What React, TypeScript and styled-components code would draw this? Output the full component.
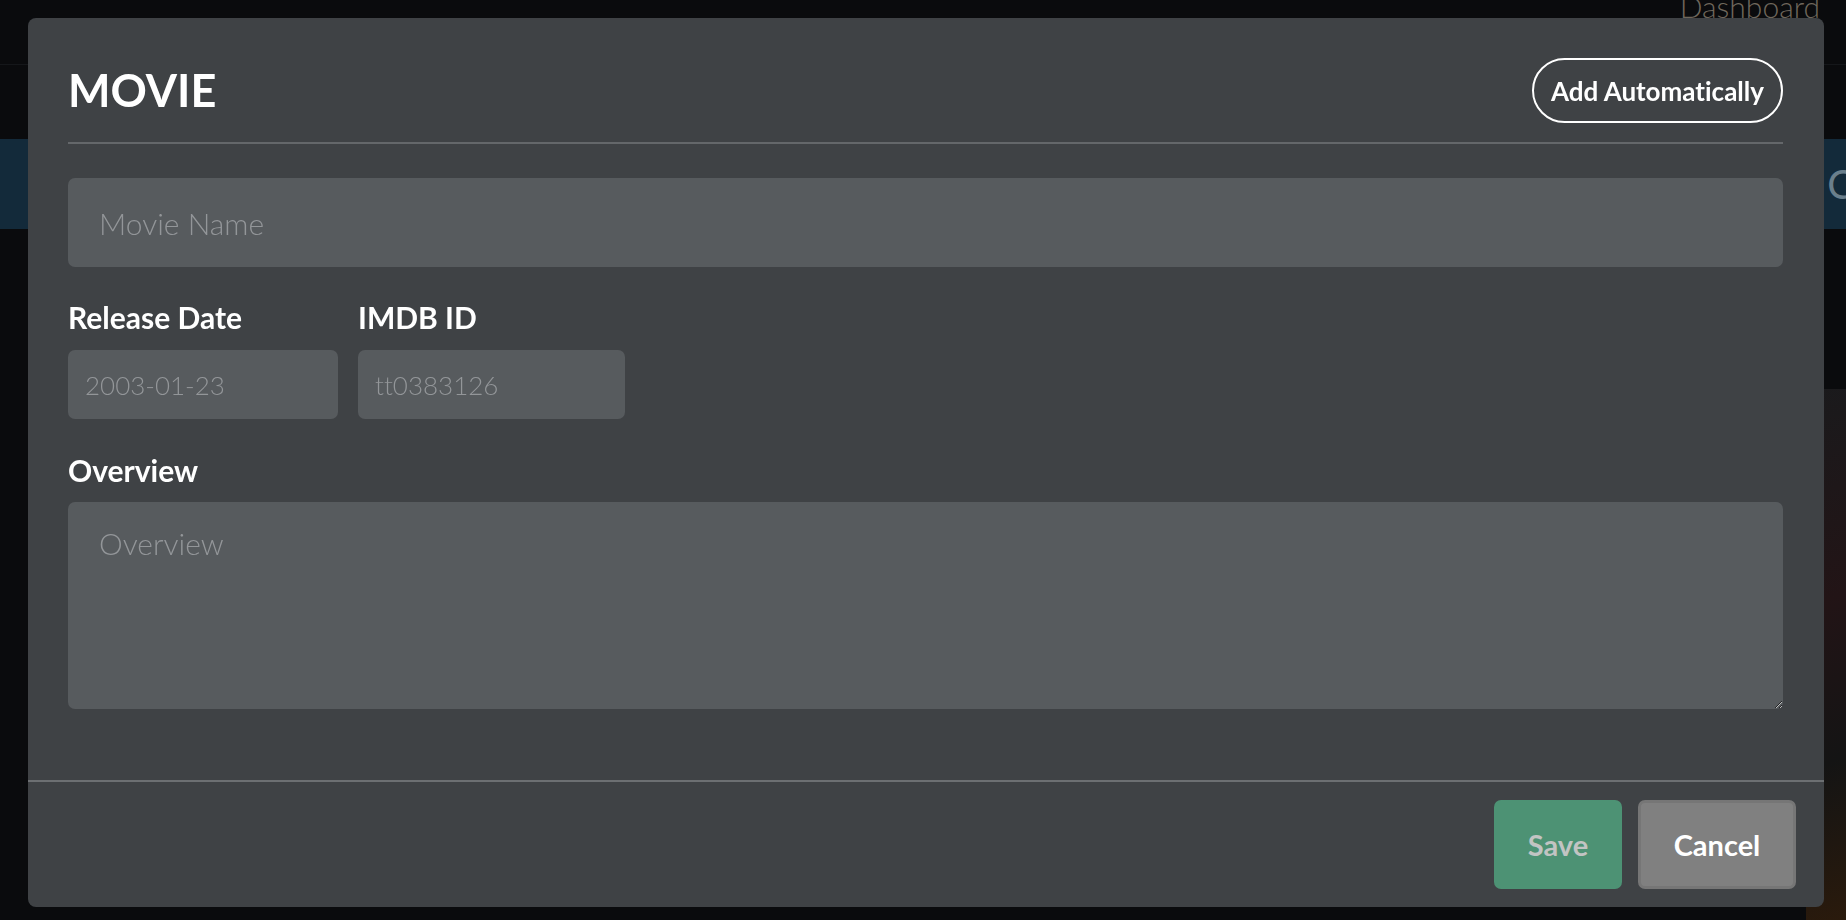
import React from "react";
import styled, { createGlobalStyle } from "styled-components";

const GlobalStyle = createGlobalStyle`
  html, body { margin: 0; padding: 0; }
  body {
    background: #0a0b0d;
    font-family: "Lato", "Noto Sans", sans-serif;
    color: #fff;
    overflow: hidden;
    font-variant-ligatures: none;
  }
  * { box-sizing: border-box; }
  input, textarea, button { font-variant-ligatures: none; }
`;

/* ---------- Backdrop page (dimmed behind the modal) ---------- */
const Page = styled.div`
  width: 1846px;
  height: 920px;
  display: flex;
  flex-direction: column;
  background: #0a0b0d;
`;

const NavBar = styled.div`
  height: 65px;
  display: flex;
  justify-content: flex-end;
  align-items: flex-start;
  padding-right: 26px;
  border-bottom: 1px solid #15171a;
  overflow: hidden;
`;

const NavLink = styled.span`
  font-family: "Lato", sans-serif;
  font-weight: 300;
  font-size: 30px;
  line-height: 36px;
  margin-top: -12px;
  color: #6f675c;
`;

const Banner = styled.div`
  margin-top: 74px;
  height: 90px;
  background: #132a3a;
  display: flex;
  justify-content: flex-end;
  align-items: center;
  overflow: hidden;
`;

const BannerText = styled.span`
  font-size: 40px;
  font-weight: 400;
  color: #6a7f8c;
  margin-right: -8px;
`;

const PosterRow = styled.div`
  margin-top: 160px;
  flex: 1;
  display: flex;
  justify-content: flex-end;
`;

const Poster = styled.div`
  width: 40px;
  height: 100%;
  background: linear-gradient(160deg, #1a1a1c 0%, #221416 40%, #141414 70%, #2a1a0c 100%);
`;

/* ---------- Modal ---------- */
const Overlay = styled.div`
  position: fixed;
  inset: 0;
  display: flex;
  padding: 18px 22px 13px 28px;
`;

const Modal = styled.div`
  flex: 1;
  display: flex;
  flex-direction: column;
  background: #3f4245;
  border-radius: 8px;
  overflow: hidden;
`;

const Body = styled.div`
  flex: 1;
  padding: 40px 41px 0 40px;
  display: flex;
  flex-direction: column;
`;

const Header = styled.div`
  display: flex;
  justify-content: space-between;
  align-items: center;
  padding-bottom: 19px;
  border-bottom: 2px solid #64676a;
`;

const Title = styled.h1`
  margin: 0;
  font-family: "Lato", sans-serif;
  font-weight: 700;
  font-size: 45px;
  line-height: 65px;
  color: #ffffff;
`;

const OutlineButton = styled.button`
  height: 65px;
  padding: 0 17px;
  border: 2px solid #ffffff;
  border-radius: 33px;
  background: transparent;
  color: #ffffff;
  font-family: "Lato", sans-serif;
  font-weight: 700;
  font-size: 26px;
  cursor: pointer;
`;

const Input = styled.input<{ $large?: boolean }>`
  display: block;
  width: 100%;
  height: ${(p) => (p.$large ? "89px" : "69px")};
  padding: ${(p) => (p.$large ? "0 31px" : "0 17px")};
  background: #575b5e;
  border: none;
  border-radius: 7px;
  color: #ffffff;
  font-family: "Lato", sans-serif;
  font-weight: 300;
  font-size: ${(p) => (p.$large ? "30px" : "26px")};
  outline: none;
  &::placeholder { color: #939699; }
`;

const NameInput = styled(Input)`
  margin-top: 34px;
`;

const Row = styled.div`
  display: grid;
  grid-template-columns: 270px 267px;
  column-gap: 20px;
  margin-top: 32px;
`;

const Field = styled.div`
  display: flex;
  flex-direction: column;
`;

const Label = styled.label<{ $top?: number }>`
  display: block;
  margin-top: ${(p) => p.$top ?? 0}px;
  margin-bottom: 15px;
  font-family: "Lato", sans-serif;
  font-weight: 700;
  font-size: 30px;
  line-height: 36px;
  color: #ffffff;
`;

const OverviewLabel = styled(Label)`
  margin-bottom: 14px;
`;

const TextArea = styled.textarea`
  display: block;
  width: 100%;
  height: 207px;
  padding: 23px 31px;
  background: #575b5e;
  border: none;
  border-radius: 7px;
  color: #ffffff;
  font-family: "Lato", sans-serif;
  font-weight: 300;
  font-size: 30px;
  line-height: 36px;
  resize: vertical;
  outline: none;
  &::placeholder { color: #939699; }
`;

const Footer = styled.div`
  margin-top: 71px;
  border-top: 2px solid #6c6f72;
  padding: 18px 28px 18px 28px;
  display: flex;
  justify-content: flex-end;
  gap: 16px;
`;

const FooterButton = styled.button<{ $variant: "save" | "cancel" }>`
  height: 89px;
  min-width: ${(p) => (p.$variant === "save" ? "128px" : "158px")};
  padding: 0 20px;
  border-radius: 7px;
  border: ${(p) => (p.$variant === "save" ? "none" : "3px solid #767676")};
  background: ${(p) => (p.$variant === "save" ? "#4d9274" : "#808080")};
  color: ${(p) => (p.$variant === "save" ? "#c2c4c3" : "#ffffff")};
  font-family: "Lato", sans-serif;
  font-weight: 700;
  font-size: 29px;
  cursor: pointer;
`;

export default function App() {
  return (
    <>
      <GlobalStyle />
      <Page>
        <NavBar>
          <NavLink>Dashboard</NavLink>
        </NavBar>
        <Banner>
          <BannerText>C</BannerText>
        </Banner>
        <PosterRow>
          <Poster />
        </PosterRow>
      </Page>
      <Overlay>
        <Modal>
          <Body>
            <Header>
              <Title>MOVIE</Title>
              <OutlineButton>Add Automatically</OutlineButton>
            </Header>
            <NameInput $large placeholder="Movie Name" />
            <Row>
              <Field>
                <Label>Release Date</Label>
                <Input placeholder="2003-01-23" />
              </Field>
              <Field>
                <Label>IMDB ID</Label>
                <Input placeholder="tt0383126" />
              </Field>
            </Row>
            <OverviewLabel $top={33}>Overview</OverviewLabel>
            <TextArea placeholder="Overview" />
          </Body>
          <Footer>
            <FooterButton $variant="save">Save</FooterButton>
            <FooterButton $variant="cancel">Cancel</FooterButton>
          </Footer>
        </Modal>
      </Overlay>
    </>
  );
}
